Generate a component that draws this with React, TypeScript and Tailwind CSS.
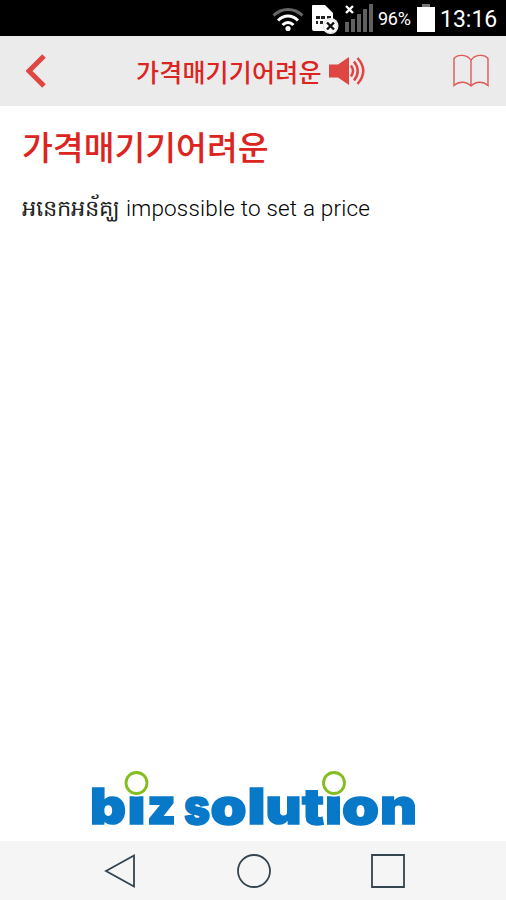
import type { ReactNode } from "react";

const WORD = "가격매기기어려운";

function WifiIcon() {
  return (
    <svg width="32" height="26" viewBox="0 0 32 26" fill="none" strokeWidth="3">
      <path d="M1.5 9.5C10 1.5 22 1.5 30.5 9.5" stroke="#666" />
      <path d="M6 14.5C12 8.5 20 8.5 26 14.5" stroke="#fff" />
      <path d="M10.5 19C14 15.5 18 15.5 21.5 19" stroke="#fff" />
      <circle cx="16" cy="22.5" r="2.6" fill="#fff" />
    </svg>
  );
}

function SimIcon() {
  return (
    <svg width="28" height="31" viewBox="0 0 28 31">
      <path d="M2 1H14L22 9V27H3Q1 27 1 25V2Q1 1 2 1Z" fill="#fff" />
      <path d="M5 12H9V15H5ZM10 12H14V15H10ZM16 12H20V15H16ZM5 17H7V20H5ZM9 17H12V20H9Z" fill="#222" />
      <circle cx="19.500" cy="22" r="8" fill="#fff" />
      <circle cx="19.500" cy="22" r="7" fill="none" stroke="#bbb" strokeWidth="0.5" />
      <path d="M16 18.500L23 25.500M23 18.500L16 25.500" stroke="#111" strokeWidth="2.4" />
    </svg>
  );
}

function SignalIcon() {
  return (
    <svg width="31" height="28" viewBox="0 0 31 28">
      <path d="M1 18H5V28H1ZM7 15H11V28H7ZM13 10H17V28H13ZM19 5H23V28H19ZM25 0H29V28H25Z" fill="#606060" />
      <path d="M2 2L9 9M9 2L2 9" stroke="#fff" strokeWidth="2.4" />
    </svg>
  );
}

function StatusBar() {
  return (
    <div className="flex h-9 items-center bg-black pl-[272px] text-white">
      <div className="mt-[2px]">
        <WifiIcon />
      </div>
      <div className="ml-[7px] mt-[3px]">
        <SimIcon />
      </div>
      <div className="ml-[5px]">
        <SignalIcon />
      </div>
      <span className="ml-[3px] mt-px w-9 text-[18px] tracking-[-0.3px]">96%</span>
      <svg className="ml-[3px]" width="18" height="28" viewBox="0 0 18 28">
        <path d="M5 0H13V3H5Z" fill="#777" />
        <path d="M0 3H18V28H0Z" fill="#fff" />
      </svg>
      <span className="ml-[5px] mt-[4px] text-[23px]">13:16</span>
    </div>
  );
}

function SpeakerIcon() {
  return (
    <svg width="37" height="28" viewBox="0 0 37 28" fill="none" stroke="#df4541" strokeWidth="2.5">
      <path d="M0 7.500H9L20 0V28L9 20.500H0Z" fill="#df4541" stroke="none" />
      <path d="M22 8.500Q26 14 22 19.500M25 4.500Q32.500 14 25 23.500M28.500 1Q40 14 28.500 27" />
    </svg>
  );
}

function BookIcon() {
  return (
    <svg width="36" height="34" viewBox="0 0 36 34" fill="none" stroke="#df5a57" strokeWidth="1.4">
      <path d="M18 6.500C14.500 0 4.500 0 1 4.500V31.500C6 27 13 27 18 32C23 27 30 27 35 31.500V4.500C31.500 0 21.500 0 18 6.500V32" />
    </svg>
  );
}

function Header() {
  return (
    <header className="flex h-[70px] items-center bg-[#ebebeb] pl-[26px] pr-[17px]">
      <svg width="20" height="34" viewBox="0 0 20 34" fill="none" stroke="#df4541" strokeWidth="5">
        <path d="M18 2L3 17L18 32" />
      </svg>
      <div className="ml-[90px] flex items-center">
        <h1 className="mt-[4px] w-[193px] whitespace-nowrap text-[25px] font-medium leading-none tracking-[0.2px] text-[#dc2420]">
          {WORD}
        </h1>
        <SpeakerIcon />
      </div>
      <div className="ml-auto">
        <BookIcon />
      </div>
    </header>
  );
}

function Logo() {
  return (
    <svg width="332" height="60" viewBox="0 0 332 60" overflow="visible">
      <text
        y="55"
        fill="#0878c8"
        stroke="#0878c8"
        strokeWidth="1.5"
        className="font-[Inter] text-[49px] font-black"
      >
        <tspan x="1" textLength="36" lengthAdjust="spacingAndGlyphs">b</tspan>
        <tspan x="38.500" textLength="18" lengthAdjust="spacingAndGlyphs">i</tspan>
        <tspan x="58" textLength="29" lengthAdjust="spacingAndGlyphs">z</tspan>
        <tspan> </tspan>
        <tspan x="95" textLength="26" lengthAdjust="spacingAndGlyphs">s</tspan>
        <tspan x="121.500" textLength="36" lengthAdjust="spacingAndGlyphs">o</tspan>
        <tspan x="158.500" textLength="18" lengthAdjust="spacingAndGlyphs">l</tspan>
        <tspan x="176.500" textLength="36" lengthAdjust="spacingAndGlyphs">u</tspan>
        <tspan x="213" textLength="22" lengthAdjust="spacingAndGlyphs">t</tspan>
        <tspan x="236" textLength="17" lengthAdjust="spacingAndGlyphs">i</tspan>
        <tspan x="253" textLength="37" lengthAdjust="spacingAndGlyphs">o</tspan>
        <tspan x="291" textLength="37" lengthAdjust="spacingAndGlyphs">n</tspan>
      </text>
      <g fill="#fff">
        <circle cx="47.500" cy="14" r="13.500" />
        <circle cx="245" cy="14" r="13.500" />
      </g>
      <g fill="none" stroke="#83bd20" strokeWidth="2.8">
        <circle cx="47.500" cy="14" r="10.500" />
        <circle cx="245" cy="14" r="10.500" />
      </g>
    </svg>
  );
}

function NavButton({ children }: { children: ReactNode }) {
  return (
    <button type="button" className="flex w-[134px] justify-center">
      <svg width="36" height="36" viewBox="0 0 36 36" fill="none" stroke="#34454f" strokeWidth="1.8">
        {children}
      </svg>
    </button>
  );
}

export default function App() {
  return (
    <div className="flex h-[900px] w-[506px] flex-col overflow-hidden bg-white font-['Roboto','Noto_Sans_CJK_KR',sans-serif]">
      <StatusBar />
      <Header />

      <main className="flex flex-1 flex-col px-[22px]">
        <h2 className="mt-[23px] whitespace-nowrap text-[33.500px] font-medium leading-[40px] text-[#dc2420]">
          {WORD}
        </h2>
        <p className="mt-[23px] flex items-center whitespace-nowrap text-[22.500px] leading-8 text-[#222]">
          <span className="w-[104px]">អនេកអន័គ្ឃ</span>
          <span className="font-light tracking-[0.19px] text-black">impossible to set a price</span>
        </p>
        <div className="mb-[12px] ml-[67px] mt-auto">
          <Logo />
        </div>
      </main>

      <nav className="flex h-[59px] items-center bg-[#f5f5f5] pl-[53px]">
        <NavButton>
          <path d="M32 2.500V33.500L4 18Z" />
        </NavButton>
        <NavButton>
          <circle cx="18" cy="18" r="16" />
        </NavButton>
        <NavButton>
          <path d="M2 2H34V34H2Z" />
        </NavButton>
      </nav>
    </div>
  );
}
